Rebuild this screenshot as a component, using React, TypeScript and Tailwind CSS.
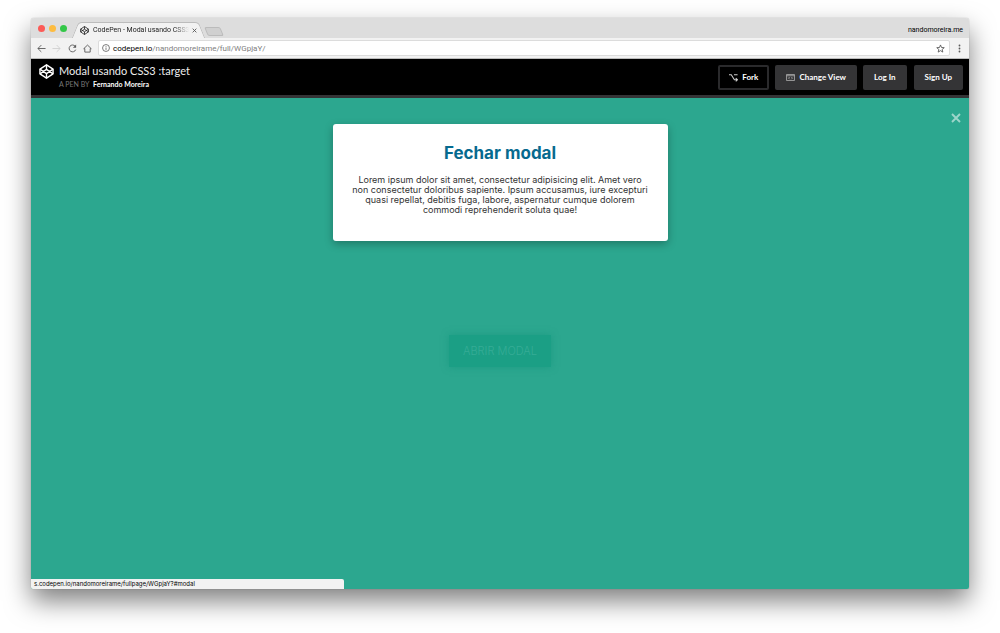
import React from "react";

function CodePenLogo({ className }: { className: string }) {
  return (
    <svg
      viewBox="0 0 24 24"
      fill="none"
      stroke="currentColor"
      strokeWidth="2.2"
      strokeLinejoin="round"
      className={className}
      aria-hidden="true"
    >
      <path d="M12 1.300 22.500 8.300v7.400L12 22.700 1.500 15.700V8.300Z" />
      <path d="M12 1.300v7.200M12 22.700v-7.200M1.500 8.300 12 15.500l10.500-7.200M1.500 15.700 12 8.500l10.500 7.200" />
    </svg>
  );
}

function TabStrip() {
  return (
    <div className="flex h-5 items-end rounded-t-[3px] bg-[#dddddd] pr-1.5 pl-[7px] font-['Roboto',sans-serif]">
      <div className="flex gap-1 self-center pt-px">
        <button aria-label="Fechar janela" className="size-[7px] rounded-full bg-[#fc5b57]" />
        <button aria-label="Minimizar janela" className="size-[7px] rounded-full bg-[#fdbc40]" />
        <button aria-label="Maximizar janela" className="size-[7px] rounded-full bg-[#33c748]" />
      </div>
      <div className="relative isolate ml-2 flex h-4 w-[127px] items-center pl-1 before:absolute before:inset-y-0 before:left-0 before:-z-10 before:w-1/2 before:-skew-x-[22deg] before:rounded-tl-sm before:border-t before:border-l before:border-[#bcbcbc] before:bg-[#f2f2f2] after:absolute after:inset-y-0 after:right-0 after:-z-10 after:w-3/5 after:skew-x-[22deg] after:rounded-tr-sm after:border-t after:border-r after:border-[#bcbcbc] after:bg-[#f2f2f2]">
        <CodePenLogo className="ml-px size-[9px] shrink-0 text-[#222]" />
        <span className="ml-1 w-24 shrink-0 mask-r-from-85% text-[7px] leading-3 whitespace-nowrap text-[#222]">
          CodePen - Modal usando CSS3
        </span>
        <button aria-label="Fechar aba" className="ml-[3px] shrink-0 text-[#555]">
          <svg viewBox="0 0 8 8" className="size-[5px]" stroke="currentColor" strokeWidth="1.400">
            <path d="m1 1 6 6M7 1 1 7" />
          </svg>
        </button>
      </div>
      <button
        aria-label="Nova aba"
        className="mb-0.5 ml-1 h-[9px] w-4 skew-x-[22deg] rounded-xs border border-[#bbbbbb] bg-[#d0d0d0]"
      />
      <span className="ml-auto self-center pt-1 text-[7px] leading-3 text-black">nandomoreira.me</span>
    </div>
  );
}

function Toolbar() {
  return (
    <div className="flex h-[21px] items-center border-b border-[#bbbbbb] bg-[#f2f2f2] pr-[7px] pl-1.5">
      <div className="flex gap-1.5 text-[#5a5a5a]">
        <button aria-label="Voltar">
          <svg viewBox="0 0 10 10" className="size-[9px]" fill="none" stroke="currentColor">
            <path d="M9.500 5H1M4.800 1.200 1 5l3.800 3.800" />
          </svg>
        </button>
        <button aria-label="Avançar" className="text-[#d0d0d0]">
          <svg viewBox="0 0 10 10" className="size-[9px]" fill="none" stroke="currentColor">
            <path d="M.5 5H9M5.200 1.200 9 5 5.200 8.800" />
          </svg>
        </button>
        <button aria-label="Recarregar" className="ml-px">
          <svg viewBox="0 0 10 10" className="size-[9px]" fill="none" stroke="currentColor">
            <path d="M8.600 6.300A3.800 3.800 0 1 1 8 2.500" />
            <path d="M9 .6v3.600H5.400Z" fill="currentColor" stroke="none" />
          </svg>
        </button>
        <button aria-label="Página inicial">
          <svg viewBox="0 0 10 10" className="size-[9px]" fill="none" stroke="currentColor">
            <path d="M.8 5.200 5 1.200l4.200 4H8V9H2V5.200Z" />
          </svg>
        </button>
      </div>
      <div className="ml-1.5 flex h-4 grow items-center rounded-xs border border-[#dcdcdc] bg-white pr-1 pl-[3px]">
        <svg viewBox="0 0 10 10" className="size-2 shrink-0 text-[#5a5a5a]" fill="none" stroke="currentColor">
          <circle cx="5" cy="5" r="4.300" />
          <path d="M5 4.400v3M5 2.500v1" />
        </svg>
        <p className="ml-[3px] grow pt-px font-['Roboto',sans-serif] text-[8px] leading-3 text-[#808080]">
          <span className="text-black">codepen.io</span>/nandomoreirame/full/WGpjaY/
        </p>
        <button aria-label="Adicionar aos favoritos" className="text-[#5a5a5a]">
          <svg viewBox="0 0 24 24" className="size-[9px]" fill="none" stroke="currentColor" strokeWidth="2.400">
            <path d="m12 2.500 2.700 6.800 7.300.5-5.600 4.700 1.800 7.100L12 17.700l-6.200 3.900 1.800-7.100L2 9.800l7.300-.5Z" />
          </svg>
        </button>
      </div>
      <button aria-label="Menu" className="ml-2 w-1 text-[#5a5a5a]">
        <svg viewBox="0 0 3 9" className="h-[9px] w-[3px]" fill="currentColor">
          <circle cx="1.500" cy="1.500" r=".9" />
          <circle cx="1.500" cy="4.500" r=".9" />
          <circle cx="1.500" cy="7.500" r=".9" />
        </svg>
      </button>
    </div>
  );
}

function PenHeader() {
  return (
    <header className="flex h-[39px] items-center justify-between border-b-3 border-[#343436] bg-black pr-1.5 pl-2 font-['Lato',sans-serif] text-white">
      <div className="flex items-start gap-[5px]">
        <CodePenLogo className="size-[15px]" />
        <div>
          <h1 className="text-[11px] leading-[14px] text-[#eeeeee]">Modal usando CSS3 :target</h1>
          <p className="text-[7px] leading-3 font-bold">
            <span className="mr-0.5 font-normal text-[#777] uppercase">A Pen by</span> Fernando Moreira
          </p>
        </div>
      </div>
      <nav className="flex text-[8px] leading-3 font-bold">
        <button className="flex h-[25px] items-center gap-1 rounded-xs border-2 border-[#2a2a2c] px-[9px]">
          <svg viewBox="0 0 10 10" className="size-[9px] text-[#ccc]" fill="none" stroke="currentColor" strokeWidth="1.200">
            <path d="M0 2h2.500l3.500 5.500h3M5.500 2H9.500M7.500 5.700l2 1.800-2 1.800" />
          </svg>
          Fork
        </button>
        <button className="ml-1.5 flex h-[25px] items-center gap-1 rounded-xs bg-[#343436] px-[11px]">
          <svg viewBox="0 0 10 8" className="h-[7px] w-[9px] text-[#aaa]" fill="none" stroke="currentColor">
            <path d="M.5.500h9v7h-9ZM.5 2h9M4 3.400 2.800 4.700 4 6M6 3.400l1.200 1.300L6 6" />
          </svg>
          Change View
        </button>
        <button className="ml-1.5 h-[25px] rounded-xs bg-[#343436] px-[11px]">Log In</button>
        <button className="ml-[7px] h-[25px] rounded-xs bg-[#343436] px-[11px]">Sign Up</button>
      </nav>
    </header>
  );
}

export default function App() {
  return (
    <div className="flex min-h-screen flex-col bg-white px-[31px] pt-[18px] pb-11 font-['Inter',sans-serif]">
      <div className="flex grow flex-col rounded-[3px] shadow-[0_12px_26px_rgba(0,0,0,0.5),0_0_1px_rgba(0,0,0,0.4)]">
        <TabStrip />
        <Toolbar />
        <PenHeader />
        <main className="relative flex grow flex-col items-center overflow-hidden rounded-b-[2px] bg-[#2ca78f] pt-[26px]">
          <section
            role="dialog"
            aria-labelledby="modal-title"
            className="w-[335px] rounded-[3px] bg-white px-4 pt-[18px] pb-[26px] text-center shadow-[0_3px_8px_rgba(0,0,0,0.28)]"
          >
            <h2 id="modal-title" className="text-[17px] leading-[22px] font-bold text-[#066a8f]">
              Fechar modal
            </h2>
            <p className="mt-[11px] text-[9px] leading-[10px] text-[#333]">
              Lorem ipsum dolor sit amet, consectetur adipisicing elit. Amet vero
              <br />
              non consectetur doloribus sapiente. Ipsum accusamus, iure excepturi
              <br />
              quasi repellat, debitis fuga, labore, aspernatur cumque dolorem
              <br />
              commodi reprehenderit soluta quae!
            </p>
          </section>
          <a
            href="#modal"
            className="mt-[94px] flex h-8 w-[102px] items-center justify-center bg-[#1b9f85] text-[11px] font-light text-[#36ac96] uppercase shadow-[0_0_7px_rgba(22,150,125,0.7)]"
          >
            Abrir modal
          </a>
          <a href="#" aria-label="Fechar modal" className="absolute top-[15px] right-2 text-[#9dd5ca]">
            <svg viewBox="0 0 10 10" className="size-[10px]" stroke="currentColor" strokeWidth="1.900">
              <path d="m1 1 8 8M9 1 1 9" />
            </svg>
          </a>
          <div className="absolute bottom-0 left-0 h-[10px] w-1/3 rounded-tr-xs bg-[#f2f2f2] px-[3px] text-[6px] leading-[10px] text-black">
            s.codepen.io/nandomoreirame/fullpage/WGpjaY?#modal
          </div>
        </main>
      </div>
    </div>
  );
}
